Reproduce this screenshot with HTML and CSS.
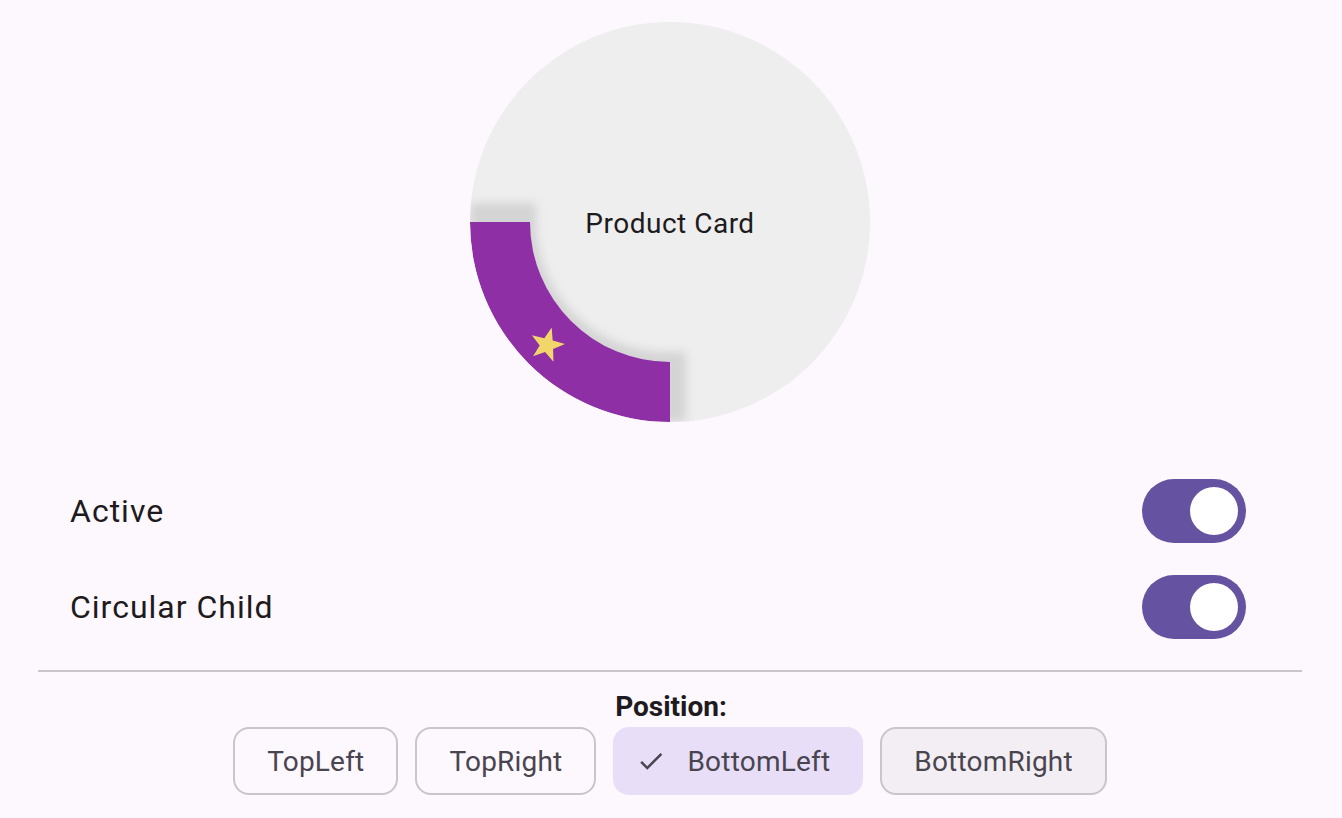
FILE: index.html
```html
<!DOCTYPE html>
<html lang="en">
<head>
<meta charset="utf-8">
<title>Product Card</title>
<link rel="stylesheet" href="styles.css">
</head>
<body>
<div class="hero">
  <div class="card">
    <svg class="ring" width="400" height="400" viewBox="0 0 400 400" aria-hidden="true">
      <defs>
        <clipPath id="disc"><circle cx="200" cy="200" r="200"/></clipPath>
        <filter id="soft" x="-20%" y="-20%" width="140%" height="140%">
          <feGaussianBlur stdDeviation="5"/>
        </filter>
      </defs>
      <g clip-path="url(#disc)">
        <path class="ring-shadow" filter="url(#soft)" d="M 0 181 H 66 V 200 A 130 130 0 0 0 200 330 H 216 V 400 H 0 Z"/>
        <path class="ring-band" d="M 0 200 H 60 A 140 140 0 0 0 200 340 V 400 A 200 200 0 0 1 0 200 Z"/>
        <polygon class="ring-star" transform="translate(77 323) rotate(15)" points="0,-18 4.29,-5.91 17.12,-5.56 6.94,2.26 10.58,14.56 0,7.3 -10.58,14.56 -6.94,2.26 -17.12,-5.56 -4.29,-5.91"/>
      </g>
    </svg>
    <span class="card-title">Product Card</span>
  </div>
</div>

<div class="settings">
  <div class="tile">
    <span class="tile-label">Active</span>
    <span class="switch"><span class="thumb"></span></span>
  </div>
  <div class="tile">
    <span class="tile-label">Circular Child</span>
    <span class="switch"><span class="thumb"></span></span>
  </div>
</div>

<hr class="divider">

<div class="position">
  <div class="position-label">Position:</div>
  <div class="chips">
    <button class="chip">TopLeft</button>
    <button class="chip">TopRight</button>
    <button class="chip chip-selected">
      <svg class="chip-check" width="30" height="30" viewBox="0 0 24 24" aria-hidden="true"><path d="M9 16.17L4.83 12l-1.42 1.41L9 19 21 7l-1.41-1.41z"/></svg>
      <span>BottomLeft</span>
    </button>
    <button class="chip chip-hover">BottomRight</button>
  </div>
</div>
</body>
</html>
```
FILE: styles.css
```css
html, body {
  margin: 0;
  padding: 0;
}

body {
  width: 1342px;
  height: 818px;
  overflow: hidden;
  background: #fdf7fe;
  font-family: Roboto, "Noto Sans", "Liberation Sans", sans-serif;
  color: #1d1b20;
}

.hero {
  display: flex;
  justify-content: center;
  padding-top: 22px;
  padding-right: 2px;
}

.card {
  position: relative;
  width: 400px;
  height: 400px;
  border-radius: 50%;
  background: #eeeeee;
  display: flex;
  align-items: center;
  justify-content: center;
}

.ring {
  position: absolute;
  left: 0;
  top: 0;
}

.ring-shadow {
  fill: rgba(0, 0, 0, 0.11);
}

.ring-band {
  fill: #8e2fa6;
}

.ring-star {
  fill: #f2d66c;
}

.card-title {
  position: relative;
  margin-top: 4px;
  font-size: 28px;
  line-height: 32px;
  letter-spacing: 0.5px;
  color: #1d1b20;
}

.settings {
  margin: 41px 40px 0 38px;
}

.tile {
  height: 96px;
  display: flex;
  align-items: center;
  justify-content: space-between;
  padding: 0 56px 0 32px;
}

.tile-label {
  font-size: 32px;
  line-height: 40px;
  letter-spacing: 1px;
  color: #1d1b20;
}

.switch {
  width: 104px;
  height: 64px;
  border-radius: 32px;
  background: #6552a0;
  display: flex;
  align-items: center;
  justify-content: flex-end;
  padding-right: 8px;
  box-sizing: border-box;
}

.thumb {
  width: 48px;
  height: 48px;
  border-radius: 50%;
  background: #ffffff;
}

.divider {
  margin: 15px 40px 0 38px;
  height: 2px;
  border: 0;
  background: #cac4cc;
}

.position-label {
  margin-top: 19px;
  text-align: center;
  font-size: 28px;
  line-height: 32px;
  font-weight: 700;
  color: #1d1b20;
}

.chips {
  margin-top: 4px;
  display: flex;
  justify-content: center;
  gap: 17px;
  padding-right: 2px;
}

.chip {
  height: 68px;
  box-sizing: border-box;
  border: 2px solid #cac4cc;
  border-radius: 16px;
  background: transparent;
  padding: 0 32px;
  display: flex;
  align-items: center;
  font-family: Roboto, "Noto Sans", "Liberation Sans", sans-serif;
  font-size: 28px;
  letter-spacing: 0.2px;
  color: #49454f;
  cursor: pointer;
}

.chip-selected {
  background: #e8def8;
  border-color: #e8def8;
  padding-left: 21px;
  padding-right: 31px;
  gap: 21px;
}

.chip-check {
  fill: #49454f;
  flex: none;
}

.chip-hover {
  background: #f2eef4;
}
```
